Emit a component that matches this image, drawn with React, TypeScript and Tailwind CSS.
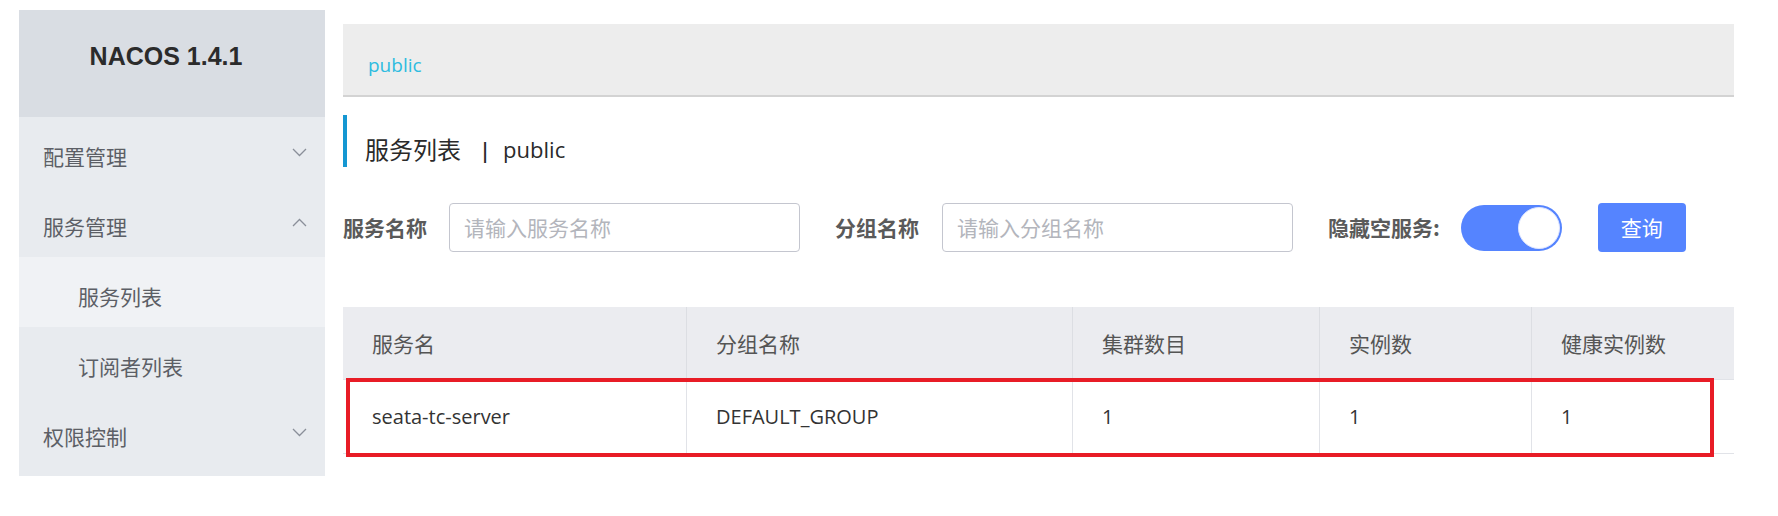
import React from "react";

const Chevron = ({ up = false }: { up?: boolean }) => (
  <svg width="15" height="9" viewBox="0 0 15 9" className="shrink-0">
    <polyline
      points={up ? "1,8 7.5,1.5 14,8" : "1,1 7.5,7.5 14,1"}
      fill="none"
      stroke="#8a8f99"
      strokeWidth="1.3"
    />
  </svg>
);

const cjk = "font-['Noto_Sans_CJK_SC',sans-serif]";

function MenuItem({ label, up, sub, active }: { label: string; up?: boolean; sub?: boolean; active?: boolean }) {
  return (
    <div
      className={`flex h-[70px] items-center justify-between ${sub ? "pl-[59px]" : "pl-[24px]"} pr-[18px] ${
        active ? "bg-[#f0f2f5]" : ""
      }`}
    >
      <span className={`${cjk} pt-[8px] text-[21px] leading-[21px] text-[#5c5f66]`}>{label}</span>
      {!sub && <Chevron up={up} />}
    </div>
  );
}

export default function App() {
  const cols = "grid grid-cols-[343px_386px_247px_212px_203px]";
  const headers = ["服务名", "分组名称", "集群数目", "实例数", "健康实例数"];
  const row = ["seata-tc-server", "DEFAULT_GROUP", "1", "1", "1"];
  return (
    <div className="flex h-[516px] w-[1778px] bg-white pl-[19px] pt-[10px]">
      {/* Sidebar */}
      <div className="flex h-[466px] w-[306px] flex-col bg-[#e8ebef]">
        <div className="flex h-[107px] justify-center bg-[#d9dde3] pr-[12px] pt-[34px]">
          <span className="font-['Liberation_Sans',sans-serif] text-[25px] font-bold leading-[25px] text-[#2b2b2b]">
            NACOS 1.4.1
          </span>
        </div>
        <MenuItem label="配置管理" />
        <MenuItem label="服务管理" up />
        <MenuItem label="服务列表" sub active />
        <MenuItem label="订阅者列表" sub />
        <MenuItem label="权限控制" />
      </div>

      {/* Main */}
      <div className="ml-[18px] flex w-[1391px] flex-col pt-[14px]">
        <div className="flex h-[73px] items-center border-b-2 border-[#d3d3d3] bg-[#ededed] pl-[25px] pt-[11px]">
          <span className="font-['Open_Sans',sans-serif] text-[19px] leading-[20px] text-[#2fbce0]">public</span>
        </div>

        <div className="mt-[18px] flex h-[52px] items-center border-l-4 border-[#1597d2] pl-[18px] pt-[16px]">
          <span className={`${cjk} text-[24px] leading-[24px] text-[#2a2a2a]`}>服务列表</span>
          <span className="ml-[18px] mr-[12px] font-['Open_Sans',sans-serif] text-[22px] font-semibold leading-[24px] text-[#2a2a2a]">
            |
          </span>
          <span className="font-['Open_Sans',sans-serif] text-[22px] leading-[24px] text-[#2a2a2a]">public</span>
        </div>

        <div className="mt-[36px] flex h-[49px] items-center">
          <span className={`${cjk} text-[21px] font-bold leading-[21px] text-[#5a5a5a]`}>服务名称</span>
          <div className="ml-[22px] flex h-[49px] w-[351px] items-center rounded-[4px] border border-[#c4c6cf] pl-[14px]">
            <span className={`${cjk} text-[21px] leading-[21px] text-[#b3b5bc]`}>请输入服务名称</span>
          </div>
          <span className={`${cjk} ml-[35px] text-[21px] font-bold leading-[21px] text-[#5a5a5a]`}>分组名称</span>
          <div className="ml-[23px] flex h-[49px] w-[351px] items-center rounded-[4px] border border-[#c4c6cf] pl-[14px]">
            <span className={`${cjk} text-[21px] leading-[21px] text-[#b3b5bc]`}>请输入分组名称</span>
          </div>
          <span className={`${cjk} ml-[35px] text-[21px] font-bold leading-[21px] text-[#5a5a5a]`}>隐藏空服务:</span>
          <div className="ml-[21px] flex h-[46px] w-[101px] items-center justify-end rounded-full bg-[#5584ff] pr-[2px]">
            <div className="h-[42px] w-[42px] rounded-full border border-[#dfe6ff] bg-white" />
          </div>
          <div className="ml-[36px] flex h-[49px] w-[88px] items-center justify-center rounded-[4px] bg-[#5584ff]">
            <span className={`${cjk} text-[21px] leading-[21px] text-white`}>查询</span>
          </div>
        </div>

        <div className="relative mt-[55px]">
          <div className={`${cols} h-[72px] bg-[#ebecf0]`}>
            {headers.map((h, i) => (
              <div
                key={h}
                className={`flex items-center pl-[29px] ${i > 0 ? "border-l border-[#dcdee3]" : ""}`}
              >
                <span className={`${cjk} text-[21px] leading-[21px] text-[#555]`}>{h}</span>
              </div>
            ))}
          </div>
          <div className={`${cols} h-[75px] border-y border-[#e1e3e8] bg-white`}>
            {row.map((v, i) => (
              <div
                key={i}
                className={`flex items-center pl-[29px] ${i > 0 ? "border-l border-[#e1e3e8]" : ""}`}
              >
                <span className="font-['Open_Sans','Noto_Sans_CJK_SC',sans-serif] text-[20px] leading-[20px] text-[#333]">
                  {v}
                </span>
              </div>
            ))}
          </div>
          <div className="pointer-events-none absolute left-[3px] top-[71px] h-[79px] w-[1368px] border-4 border-[#e81c26]" />
        </div>
      </div>
    </div>
  );
}
